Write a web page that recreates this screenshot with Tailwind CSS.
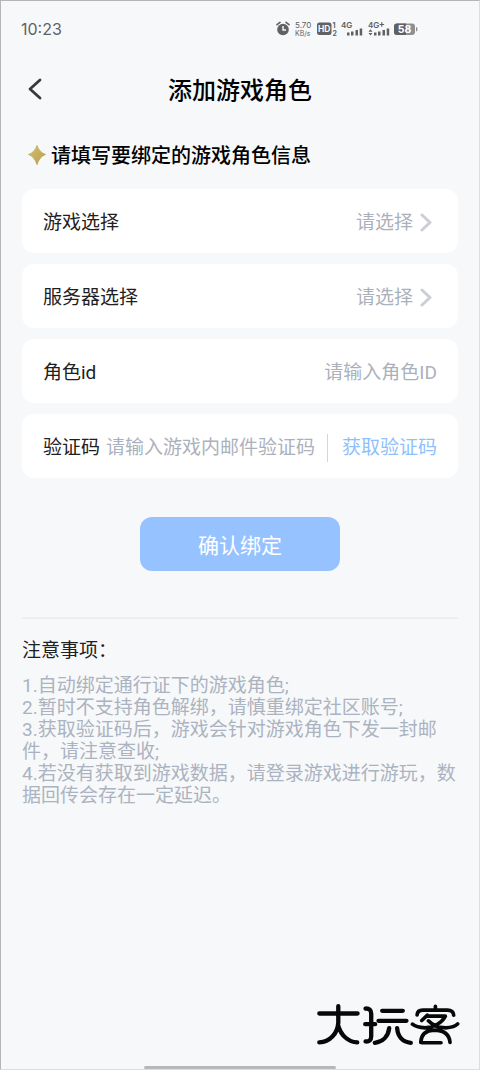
<!DOCTYPE html>
<html lang="zh-CN">
<head>
<meta charset="utf-8">
<meta name="viewport" content="width=device-width, initial-scale=1">
<title>添加游戏角色</title>
<script src="https://cdn.jsdelivr.net/npm/@tailwindcss/browser@4"></script>
</head>
<body class="flex min-h-screen flex-col border border-[#dcdde0] border-t-[#b4b5b8] border-l-[#b4b5b8] bg-[#f7f8fa] font-[Roboto,'Noto_Sans_CJK_SC',sans-serif] text-[19px] leading-7 text-[#1f2022]">
  <!-- status bar -->
  <div class="flex h-14 shrink-0 items-center justify-between pr-[61px] pl-5 text-[#606163]">
    <span class="font-[Inter,sans-serif] text-base">10:23</span>
    <svg class="h-4 w-[142px]" viewBox="0 0 142 16" fill="currentColor" font-family="Inter, sans-serif" role="img" aria-label="状态栏">
      <circle cx="7" cy="8.500" r="5.800"/>
      <path d="M1 3.700 4 1.300M13 3.700 10 1.300" stroke="currentColor" stroke-width="1.600" stroke-linecap="round"/>
      <path d="M7 5V9H10" fill="none" stroke="#f7f8fa" stroke-width="1.400"/>
      <text x="19" y="7" font-size="8">5.70</text>
      <text x="19" y="14.500" font-size="7">KB/s</text>
      <rect x="41" y="1.500" width="14.500" height="12.500" rx="2.500"/>
      <text x="48.200" y="11" font-size="8.500" font-weight="700" fill="#f7f8fa" text-anchor="middle">HD</text>
      <text x="56.500" y="6.500" font-size="7" font-weight="700">1</text>
      <text x="56.500" y="14.500" font-size="7" font-weight="700">2</text>
      <text x="65" y="7" font-size="8" font-weight="600">4G</text>
      <path d="M71 11.500h2.500v3H71zM75 10.500h2.500v4H75zM79.500 9h2.500v5.500h-2.500zM83.700 7.500h2.500v7h-2.500z"/>
      <text x="92" y="7" font-size="8" font-weight="600">4G</text>
      <path d="M105.800 1.200v4.600M103.500 3.500h4.600" stroke="currentColor" stroke-width="1.200"/>
      <path d="m94.500 8.200 2 2.600h-4zM94.500 14.600l2-2.600h-4zM98 11.500h2.500v3H98zM102 10.500h2.500v4H102zM106.500 9h2.500v5.500h-2.500zM110.700 7.500h2.500v7h-2.500z"/>
      <rect x="118" y="2.500" width="21" height="11.500" rx="3" fill="#8e8f91"/>
      <path d="M121 2.500h9V14h-9a3 3 0 0 1-3-3V5.500a3 3 0 0 1 3-3z"/>
      <path d="M140 6c2 .5 2 4 0 4.500z" fill="#8e8f91"/>
      <text x="128.500" y="12" font-size="10.500" font-weight="700" fill="#fff" text-anchor="middle">58</text>
    </svg>
  </div>

  <header class="grid h-16 shrink-0 grid-cols-[48px_1fr_48px] items-center px-2.5">
    <button type="button" aria-label="返回" class="flex size-12 items-center justify-center">
      <svg class="size-6" viewBox="0 0 24 24" fill="none" stroke="#38393c" stroke-width="2.800" stroke-linecap="round" stroke-linejoin="round"><path d="M17 3 7 12l10 9"/></svg>
    </button>
    <h1 class="pt-[3px] text-center text-2xl font-medium text-black">添加游戏角色</h1>
  </header>

  <main class="flex flex-col px-[21px]">
    <h2 class="flex h-[68px] items-center gap-[3px] pt-0.5 pl-1 text-xl font-medium text-black">
      <svg class="h-6 w-[22px]" viewBox="0 0 22 24" aria-hidden="true">
        <defs><linearGradient id="gold" x1="0" y1="0" x2="1" y2="1"><stop offset="0" stop-color="#d5bd70"/><stop offset="1" stop-color="#b7a050"/></linearGradient></defs>
        <path d="M11 1.500Q13.500 8.500 19.500 10.500 13.500 12.500 11 20.500 8.500 12.500 2.500 10.500 8.500 8.500 11 1.500Z" fill="url(#gold)" stroke="url(#gold)" stroke-linejoin="round"/>
      </svg>
      请填写要绑定的游戏角色信息
    </h2>

    <form class="flex flex-col">
      <div class="flex flex-col gap-[11px]">
        <div class="flex h-16 items-center rounded-xl bg-white px-[21px] pt-[3px]">
          <label for="game">游戏选择</label>
          <div class="relative flex flex-1 items-center">
            <select id="game" class="w-full appearance-none bg-transparent pr-6 text-right text-[#abb1bc] outline-none"><option>请选择</option></select>
            <svg class="pointer-events-none absolute right-1 h-5 w-3.5" viewBox="0 0 14 20" fill="none" stroke="#cbced4" stroke-width="3" stroke-linecap="round" stroke-linejoin="round"><path d="m3 2 8 7.500L3 17"/></svg>
          </div>
        </div>
        <div class="flex h-16 items-center rounded-xl bg-white px-[21px] pt-[3px]">
          <label for="server">服务器选择</label>
          <div class="relative flex flex-1 items-center">
            <select id="server" class="w-full appearance-none bg-transparent pr-6 text-right text-[#abb1bc] outline-none"><option>请选择</option></select>
            <svg class="pointer-events-none absolute right-1 h-5 w-3.5" viewBox="0 0 14 20" fill="none" stroke="#cbced4" stroke-width="3" stroke-linecap="round" stroke-linejoin="round"><path d="m3 2 8 7.500L3 17"/></svg>
          </div>
        </div>
        <div class="flex h-16 items-center rounded-xl bg-white px-[21px] pt-[3px]">
          <label for="role">角色id</label>
          <input id="role" type="text" placeholder="请输入角色ID" class="min-w-0 flex-1 bg-transparent text-right outline-none placeholder:text-[#abb1bc]">
        </div>
        <div class="flex h-16 items-center rounded-xl bg-white px-[21px] pt-[3px]">
          <label for="code" class="shrink-0">验证码</label>
          <input id="code" type="text" placeholder="请输入游戏内邮件验证码" class="ml-1.5 min-w-0 flex-1 bg-transparent outline-none placeholder:text-[#abb1bc]">
          <button type="button" class="flex shrink-0 items-center gap-3.5 text-[#8fc0fb]"><span class="h-7 w-px bg-[#d3d6db]"></span>获取验证码</button>
        </div>
      </div>
      <button type="submit" class="mt-[39px] h-[54px] w-[200px] self-center rounded-xl bg-[#96c3ff] pt-[3px] text-[21px] text-white">确认绑定</button>
    </form>

    <section class="mt-[46px] border-t-2 border-[#eeeff2] pt-[18px]">
      <h2>注意事项：</h2>
      <ol class="mt-2.5 leading-[22px] text-[#abb3c0]">
        <li>1.自动绑定通行证下的游戏角色;</li>
        <li>2.暂时不支持角色解绑，请慎重绑定社区账号;</li>
        <li>3.获取验证码后，游戏会针对游戏角色下发一封邮件，请注意查收;</li>
        <li>4.若没有获取到游戏数据，请登录游戏进行游玩，数据回传会存在一定延迟。</li>
      </ol>
    </section>
  </main>

  <footer class="mt-auto flex flex-col">
    <svg class="mr-[19px] mb-5 h-[43px] w-[143px] self-end" viewBox="50 38 430 128" fill="none" stroke="#080808" stroke-width="13" stroke-linecap="round" stroke-linejoin="round" role="img" aria-label="大玩客">
      <path d="M57 69H172M114 47V96C112 130 88 154 57 156M114 106C122 134 144 155 171 156"/>
      <path d="M196 54C207 53 213 59 213 69V137C213 149 207 154 196 153M195 101H225M246 61H308M235 91H319M267 113C264 137 249 154 224 157M291 113C293 138 307 155 332 157"/>
      <path stroke-width="11" d="M406 47V58M351 73C352 62 358 59 368 59H442C454 59 460 63 461 74M382 74 365 90M382 77H436C426 97 399 112 375 112C358 111 345 108 337 101M385 91C398 105 417 112 437 112C454 111 466 108 473 100M362 156C363 134 376 120 402 119 431 119 448 132 450 156M365 157H423"/>
    </svg>
    <div class="h-[3px] w-48 self-center rounded-full bg-[#b7b8ba]"></div>
  </footer>
</body>
</html>
